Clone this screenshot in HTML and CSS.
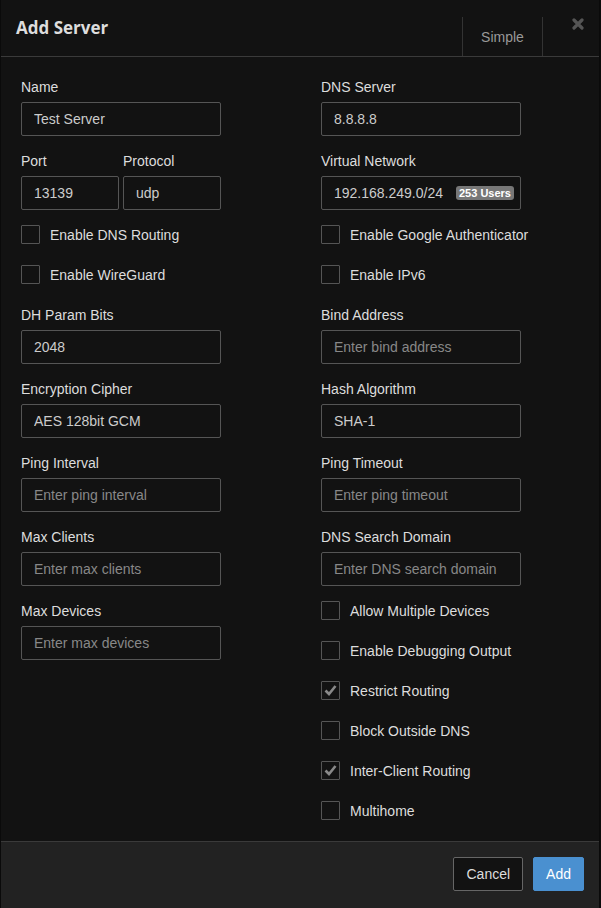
FILE: index.html
```html
<!DOCTYPE html>
<html lang="en">
<head>
    <meta charset="UTF-8">
    <meta name="viewport" content="width=device-width, initial-scale=1.0">
    <title>Add Server</title>
    <link rel="stylesheet" href="styles.css">
</head>
<body>
    <div class="modal">
        <div class="modal-header">
            <h4 class="modal-title">Add Server</h4>
            <button type="button" class="mode-btn">Simple</button>
            <button type="button" class="close-btn" aria-label="Close">
                <svg width="12" height="12" viewBox="0 0 12 12"><path d="M2 2L10 10M10 2L2 10" stroke="#555" stroke-width="3.2" stroke-linecap="round" fill="none"/></svg>
            </button>
        </div>

        <form class="modal-body">
            <div class="col">
                <div class="form-group">
                    <label for="name">Name</label>
                    <input type="text" id="name" value="Test Server">
                </div>
                <div class="form-group pair">
                    <div>
                        <label for="port">Port</label>
                        <input type="text" id="port" value="13139">
                    </div>
                    <div>
                        <label for="protocol">Protocol</label>
                        <input type="text" id="protocol" value="udp">
                    </div>
                </div>
                <label class="check"><span class="box"></span>Enable DNS Routing</label>
                <label class="check"><span class="box"></span>Enable WireGuard</label>
                <div class="form-group">
                    <label for="dh">DH Param Bits</label>
                    <input type="text" id="dh" value="2048">
                </div>
                <div class="form-group">
                    <label for="cipher">Encryption Cipher</label>
                    <input type="text" id="cipher" value="AES 128bit GCM">
                </div>
                <div class="form-group">
                    <label for="ping">Ping Interval</label>
                    <input type="text" id="ping" placeholder="Enter ping interval">
                </div>
                <div class="form-group">
                    <label for="maxclients">Max Clients</label>
                    <input type="text" id="maxclients" placeholder="Enter max clients">
                </div>
                <div class="form-group">
                    <label for="maxdevices">Max Devices</label>
                    <input type="text" id="maxdevices" placeholder="Enter max devices">
                </div>
            </div>

            <div class="col">
                <div class="form-group">
                    <label for="dns">DNS Server</label>
                    <input type="text" id="dns" value="8.8.8.8">
                </div>
                <div class="form-group">
                    <label for="network">Virtual Network</label>
                    <div class="input-wrap">
                        <input type="text" id="network" value="192.168.249.0/24">
                        <span class="badge">253 Users</span>
                    </div>
                </div>
                <label class="check"><span class="box"></span>Enable Google Authenticator</label>
                <label class="check"><span class="box"></span>Enable IPv6</label>
                <div class="form-group">
                    <label for="bind">Bind Address</label>
                    <input type="text" id="bind" placeholder="Enter bind address">
                </div>
                <div class="form-group">
                    <label for="hash">Hash Algorithm</label>
                    <input type="text" id="hash" value="SHA-1">
                </div>
                <div class="form-group">
                    <label for="timeout">Ping Timeout</label>
                    <input type="text" id="timeout" placeholder="Enter ping timeout">
                </div>
                <div class="form-group">
                    <label for="search">DNS Search Domain</label>
                    <input type="text" id="search" placeholder="Enter DNS search domain">
                </div>
                <label class="check"><span class="box"></span>Allow Multiple Devices</label>
                <label class="check"><span class="box"></span>Enable Debugging Output</label>
                <label class="check"><span class="box"><svg width="19" height="19" viewBox="0 0 19 19"><path d="M4.5 9.5L8 13L14.5 5" stroke="#888" stroke-width="2.6" fill="none"/></svg></span>Restrict Routing</label>
                <label class="check"><span class="box"></span>Block Outside DNS</label>
                <label class="check"><span class="box"><svg width="19" height="19" viewBox="0 0 19 19"><path d="M4.5 9.5L8 13L14.5 5" stroke="#888" stroke-width="2.6" fill="none"/></svg></span>Inter-Client Routing</label>
                <label class="check"><span class="box"></span>Multihome</label>
            </div>
        </form>

        <div class="modal-footer">
            <button type="button" class="btn btn-default">Cancel</button>
            <button type="button" class="btn btn-primary">Add</button>
        </div>
    </div>
</body>
</html>
```

FILE: styles.css
```css
html, body {
    margin: 0;
    background: #0c0c0c;
    height: 100%;
}
body {
    font-family: "Liberation Sans", Arial, sans-serif;
    font-size: 14px;
    line-height: 20px;
    color: #ddd;
}
.modal {
    width: 598px;
    min-height: 100%;
    display: flex;
    flex-direction: column;
    background: #121212;
    border-left: 1px solid #0a0a0a;
    border-right: 1px solid #0a0a0a;
}
.modal-header {
    display: flex;
    align-items: flex-start;
    height: 56px;
    padding: 0 15px 0 15px;
    border-bottom: 1px solid #3a3a3a;
}
.modal-title {
    flex: 1;
    margin: 16px 0 0;
    font-family: "Open Sans", "DejaVu Sans", sans-serif;
    font-size: 17px;
    line-height: 24px;
    font-weight: 700;
    color: #ddd;
}
.mode-btn {
    margin-top: 17px;
    width: 81px;
    height: 39px;
    padding: 0;
    background: none;
    border: none;
    border-left: 1px solid #333;
    border-right: 1px solid #333;
    color: #999;
    font-family: inherit;
    font-size: 14px;
}
.close-btn {
    margin: 18px 0 0 29px;
    padding: 0;
    width: 12px;
    height: 12px;
    background: none;
    border: none;
    line-height: 0;
}
.modal-body {
    flex: 1;
    display: grid;
    grid-template-columns: 300px 1fr;
    padding: 20px 0 0 20px;
}
.form-group {
    margin-bottom: 15px;
}
.form-group label {
    display: block;
    margin-bottom: 5px;
    color: #ddd;
}
input[type=text] {
    display: block;
    width: 200px;
    height: 34px;
    box-sizing: border-box;
    padding: 6px 12px;
    background: #121212;
    border: 1px solid #555;
    border-radius: 2px;
    color: #ccc;
    font-family: inherit;
    font-size: 14px;
}
input::placeholder {
    color: #888;
}
.pair {
    display: grid;
    grid-template-columns: 98px 98px;
    column-gap: 4px;
    width: 200px;
}
.pair input {
    width: 98px;
}
.input-wrap {
    position: relative;
    width: 200px;
}
.badge {
    position: absolute;
    right: 7px;
    top: 10px;
    padding: 0 3px;
    background: #777;
    border-radius: 3px;
    color: #fff;
    font-size: 11px;
    font-weight: 700;
    line-height: 14px;
}
.check {
    display: flex;
    align-items: flex-start;
    height: 20px;
    margin-bottom: 20px;
    color: #ddd;
}
.box {
    width: 17px;
    height: 17px;
    border: 1px solid #555;
    border-radius: 1px;
    margin-right: 10px;
    position: relative;
}
.box svg {
    position: absolute;
    left: -1px;
    top: -1px;
}
.modal-footer {
    display: flex;
    justify-content: flex-end;
    gap: 10px;
    padding: 15px 15px 17px;
    background: #222;
    border-top: 1px solid #3a3a3a;
}
.btn {
    height: 34px;
    padding: 6px 12px;
    font-family: inherit;
    font-size: 14px;
    border-radius: 2px;
}
.btn-default {
    background: #121212;
    border: 1px solid #666;
    color: #ddd;
}
.btn-primary {
    background: #4a90d0;
    border: 1px solid #4a90d0;
    color: #fff;
}
```
